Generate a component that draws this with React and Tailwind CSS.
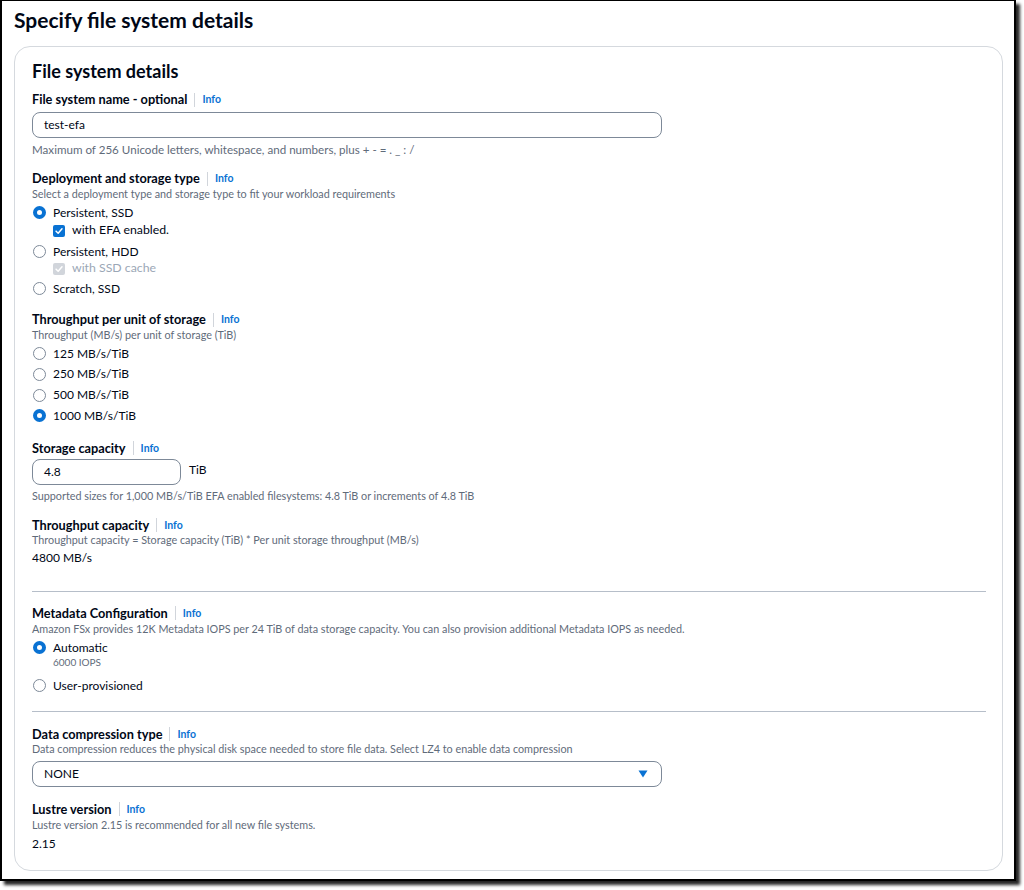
import React from 'react';

const FONT = { fontFamily: 'Lato, "Noto Sans", sans-serif' };

const Label = ({ children, className = '' }) => (
  <div className={`flex items-center h-4 ${className}`}>
    <span className="text-[12.75px] font-bold text-[#000716]">{children}</span>
    <span className="w-px h-[14px] bg-[#d1d5db] mx-[7px]" />
    <span className="text-[10.5px] font-bold text-[#0972d3]">Info</span>
  </div>
);

const Desc = ({ children, className = '' }) => (
  <div className={`h-[14px] leading-[14px] text-[10.8px] text-[#5f6b7a] ${className}`}>{children}</div>
);

const Radio = ({ checked, label, className = '' }) => (
  <div className={`flex items-center h-[17px] ${className}`}>
    <span
      className={`w-[13px] h-[13px] rounded-full box-border shrink-0 ml-[1px] ${
        checked ? 'border-[4px] border-[#0972d3] bg-white' : 'border-[1.5px] border-[#7d8998] bg-white'
      }`}
    />
    <span className="ml-[7px] text-[12px] text-[#000716]">{label}</span>
  </div>
);

const Check = ({ disabled, label, className = '' }) => (
  <div className={`flex items-center h-[17px] pl-[21px] ${className}`}>
    <span
      className={`w-[12px] h-[12px] rounded-[2px] flex items-center justify-center shrink-0 ${
        disabled ? 'bg-[#d1d5db]' : 'bg-[#0972d3]'
      }`}
    >
      <svg viewBox="0 0 12 12" className="w-[10px] h-[10px]">
        <path d="M2.5 6.2 L5 8.6 L9.6 3.4" fill="none" stroke="white" strokeWidth="1.8" strokeLinecap="round" strokeLinejoin="round" />
      </svg>
    </span>
    <span className={`ml-[7px] text-[12.3px] ${disabled ? 'text-[#9ba7b6]' : 'text-[#000716]'}`}>{label}</span>
  </div>
);

const TextBox = ({ value, width }) => (
  <div className={`h-[26px] ${width} border-[1.5px] border-[#7d8998] rounded-[8px] flex items-center pl-[11px] text-[12px] text-[#000716]`}>
    {value}
  </div>
);

export default function App() {
  return (
    <div className="bg-white w-[1024px] h-[890px]" style={FONT}>
      <div className="w-[1016px] h-[881px] bg-white border-l-2 border-r-2 border-b-2 border-t border-black shadow-[4px_4px_3px_rgba(0,0,0,0.85)] pl-[12px] pr-[11px] pt-[7px]">
        <h1 className="text-[21px] leading-[24px] font-bold text-[#000716]">Specify file system details</h1>

        <div className="mt-[14px] border border-[#d5d9de] rounded-[16px] pl-[17px] pr-[16px] pt-[13px] pb-[17px]">
          <h2 className="text-[18px] leading-[22px] font-bold text-[#000716]">File system details</h2>

          <Label className="mt-[10px]">File system name - optional</Label>
          <div className="mt-[4px]">
            <TextBox value="test-efa" width="w-[630px]" />
          </div>
          <Desc className="mt-[5px] text-[11.6px]">Maximum of 256 Unicode letters, whitespace, and numbers, plus + - = . _ : /</Desc>

          <Label className="mt-[14px]">Deployment and storage type</Label>
          <Desc>Select a deployment type and storage type to fit your workload requirements</Desc>
          <Radio checked label="Persistent, SSD" className="mt-[3px]" />
          <Check label="with EFA enabled." className="mt-[1px]" />
          <Radio label="Persistent, HDD" className="mt-[4px]" />
          <Check disabled label="with SSD cache" />
          <Radio label="Scratch, SSD" className="mt-[3px]" />

          <Label className="mt-[15px]">Throughput per unit of storage</Label>
          <Desc>Throughput (MB/s) per unit of storage (TiB)</Desc>
          <div className="mt-[3px] flex flex-col gap-[3.8px]">
            <Radio label="125 MB/s/TiB" />
            <Radio label="250 MB/s/TiB" />
            <Radio label="500 MB/s/TiB" />
            <Radio checked label="1000 MB/s/TiB" />
          </div>

          <Label className="mt-[16px]">Storage capacity</Label>
          <div className="mt-[3px] flex items-center">
            <TextBox value="4.8" width="w-[149px]" />
            <span className="ml-[8px] text-[12px] text-[#000716] self-start mt-[2px]">TiB</span>
          </div>
          <Desc className="mt-[4px]">Supported sizes for 1,000 MB/s/TiB EFA enabled filesystems: 4.8 TiB or increments of 4.8 TiB</Desc>

          <Label className="mt-[14px]">Throughput capacity</Label>
          <Desc>Throughput capacity = Storage capacity (TiB) * Per unit storage throughput (MB/s)</Desc>
          <div className="mt-[2px] h-[18px] leading-[18px] text-[12px] text-[#000716]">4800 MB/s</div>

          <div className="mt-[24px] h-px bg-[#b6bec9]" />

          <Label className="mt-[13px]">Metadata Configuration</Label>
          <Desc className="mt-[1px]">Amazon FSx provides 12K Metadata IOPS per 24 TiB of data storage capacity. You can also provision additional Metadata IOPS as needed.</Desc>
          <Radio checked label="Automatic" className="mt-[3px]" />
          <div className="h-[13px] leading-[13px] pl-[21px] text-[10px] text-[#5f6b7a]">6000 IOPS</div>
          <Radio label="User-provisioned" className="mt-[8px]" />

          <div className="mt-[17px] h-px bg-[#b6bec9]" />

          <Label className="mt-[14px]">Data compression type</Label>
          <Desc>Data compression reduces the physical disk space needed to store file data. Select LZ4 to enable data compression</Desc>
          <div className="mt-[5px] w-[630px] h-[26px] border-[1.5px] border-[#7d8998] rounded-[8px] flex items-center justify-between pl-[11px] pr-[13px] text-[12px] text-[#000716]">
            <span>NONE</span>
            <svg viewBox="0 0 10 8" className="w-[10px] h-[8px]">
              <path d="M0.5 0.5 H9.5 L5 7.5 Z" fill="#0972d3" />
            </svg>
          </div>

          <Label className="mt-[14px]">Lustre version</Label>
          <Desc className="mt-[1px]">Lustre version 2.15 is recommended for all new file systems.</Desc>
          <div className="mt-[3px] h-[18px] leading-[18px] text-[12px] text-[#000716]">2.15</div>
        </div>
      </div>
    </div>
  );
}
